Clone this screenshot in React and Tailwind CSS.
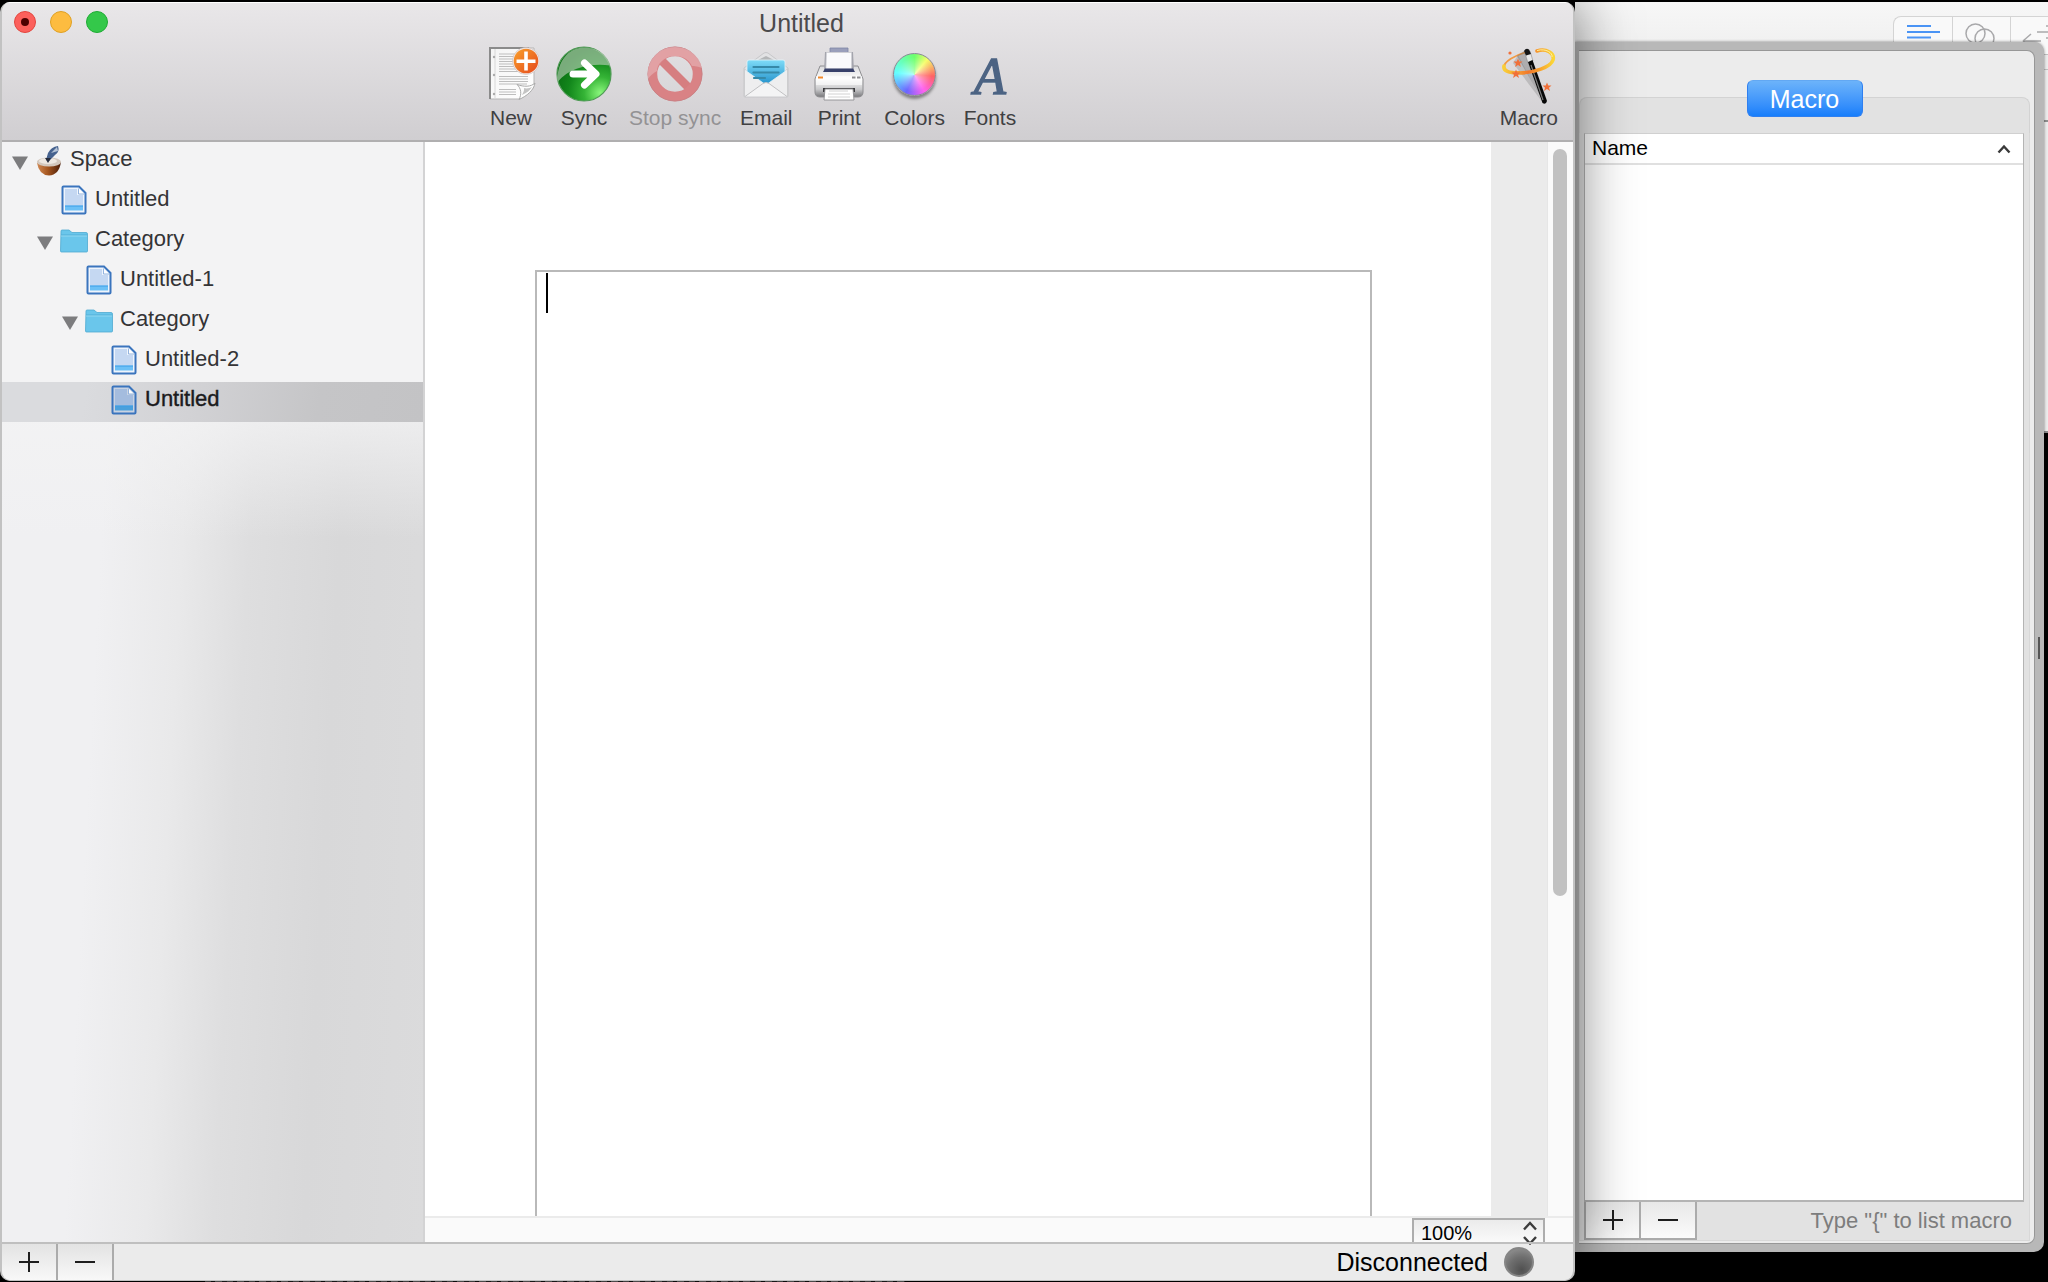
import React from "react";

function NewIcon() {
  return (
    <svg width="56" height="56" viewBox="0 0 56 56" className="shrink-0" aria-hidden="true">
      <defs>
        <linearGradient id="paper" x1="0" y1="0" x2="1" y2="1">
          <stop offset="0" stopColor="#f4f4f4" />
          <stop offset="1" stopColor="#ffffff" />
        </linearGradient>
        <linearGradient id="plus" x1="0" y1="0" x2="1" y2="1">
          <stop offset="0" stopColor="#f9a12c" />
          <stop offset="1" stopColor="#e5481c" />
        </linearGradient>
      </defs>
      <path d="M7 2H51V38L37 53H7Z" fill="url(#paper)" stroke="#b5b5b5" strokeWidth="1" />
      <path d="M7 53V2H46" fill="none" stroke="#8b8b8b" strokeWidth="2" />
      <path d="M12 3V53" stroke="#d8d8d8" strokeWidth="1" />
      <g stroke="#bdbdbd" strokeWidth="1.200">
        <path d="M16 8H34M16 10.5H31M16 13H30M16 15.5H30M16 18H31M16 20.5H32M16 23H34M16 25.5H38" />
        <path d="M16 30.500H45M16 33H45M16 35.500H45M16 38H44M16 43.500H33M16 46H33M16 48.500H33" />
      </g>
      <g fill="#aaa">
        <circle cx="11" cy="11" r="1.200" />
        <circle cx="11" cy="29" r="1.200" />
        <circle cx="11" cy="48" r="1.200" />
      </g>
      <path d="M36 53.500C39 48 38 42 34 38.500C41 41 48 41 52 37C51 44 44 50 36 53.500Z" fill="#fdfdfd" stroke="#aaa" strokeWidth="1" />
      <path d="M39 49C41.500 45 41 43 41 42C44 43 47 42 49 41C47 44 44 47 39 49Z" fill="#c4c4c4" />
      <circle cx="43" cy="15" r="13.500" fill="#f3eeee" stroke="#c9b9b5" strokeWidth="0.600" />
      <circle cx="43" cy="15" r="12.300" fill="url(#plus)" />
      <path d="M43 5.500V24.500M33.500 15.300H52.500" stroke="#fff" strokeWidth="3.600" />
    </svg>
  );
}

function SyncIcon() {
  return (
    <svg width="56" height="56" viewBox="0 0 56 56" className="shrink-0" aria-hidden="true">
      <defs>
        <radialGradient id="green" cx="0.8" cy="0.85" r="0.85">
          <stop offset="0" stopColor="#8af77c" />
          <stop offset="0.35" stopColor="#35b436" />
          <stop offset="0.7" stopColor="#12861b" />
          <stop offset="1" stopColor="#0a7013" />
        </radialGradient>
      </defs>
      <circle cx="28" cy="28" r="27" fill="url(#green)" stroke="#4f9a55" strokeWidth="1.200" />
      <path d="M1.500 35C1 16 12 1.500 28 1.500C43 1.500 52 10 54 19.500C36 17 14 21 1.500 36Z" fill="#c3d3c1" fillOpacity="0.600" />
      <path d="M17 28H39M28.500 17L40 28L28.500 39" fill="none" stroke="#fff" strokeWidth="7" strokeLinecap="round" strokeLinejoin="round" />
    </svg>
  );
}

function StopIcon() {
  return (
    <svg width="56" height="56" viewBox="0 0 56 56" className="shrink-0" aria-hidden="true">
      <path d="M12 12L44 44" stroke="#d67e80" strokeWidth="8.500" />
      <circle cx="28" cy="28" r="22.500" fill="none" stroke="#d98285" strokeWidth="9.500" />
      <circle cx="28" cy="28" r="27" fill="none" stroke="#c98286" strokeWidth="1" />
      <path d="M1 30C0 13 12 1 28 1C43 1 54 12 55 22C49 20 46 20 45 20C41 12 34 10 28 10C17 10 10 18 10 25C6 27 3 30 1 33Z" fill="#ecc0c3" fillOpacity="0.500" />
    </svg>
  );
}

function EmailIcon() {
  return (
    <svg width="46" height="56" viewBox="0 0 46 56" className="shrink-0" aria-hidden="true">
      <defs>
        <linearGradient id="letter" x1="0" y1="0" x2="0" y2="1">
          <stop offset="0" stopColor="#7fdcf8" />
          <stop offset="1" stopColor="#2593cc" />
        </linearGradient>
      </defs>
      <path d="M1 22L21 7Q23 6 25 7L45 22V50Q45 51 44 51H2Q1 51 1 50Z" fill="#e2e2e4" stroke="#c6c6c9" strokeWidth="1" />
      <path d="M15 14L23 10L31 14Z" fill="#b4b6b8" />
      <path d="M1.500 23L21 37Q23 38.500 25 37L44.500 23V50.500H1.500Z" fill="#eeeeef" stroke="#c4c4c6" strokeWidth="0.700" />
      <path d="M4 16Q4 14 6 14H40Q42 14 42 16V25.500L25 37.500Q23 38.500 21 37.500L4 25.500Z" fill="url(#letter)" stroke="#e4f4f9" strokeWidth="0.800" />
      <path d="M10.500 21H35.500M10.500 26.500H35.500M11 32H22" stroke="#3689a8" strokeWidth="2.200" strokeLinecap="round" />
      <path d="M2 50.500L20 37.500Q23 35.500 26 37.500L44 50.500" fill="#f4f4f5" stroke="#c0c0c2" strokeWidth="1" />
    </svg>
  );
}

function PrintIcon() {
  return (
    <svg width="50" height="56" viewBox="0 0 50 56" className="shrink-0" aria-hidden="true">
      <defs>
        <linearGradient id="body" x1="0" y1="0" x2="0" y2="1">
          <stop offset="0" stopColor="#d9d9db" />
          <stop offset="0.400" stopColor="#fcfcfc" />
          <stop offset="0.750" stopColor="#c9c9cb" />
          <stop offset="1" stopColor="#77777a" />
        </linearGradient>
      </defs>
      <path d="M16 2H34V8H16Z" fill="#9a9fbb" stroke="#7f86a5" strokeWidth="0.800" />
      <path d="M6 20H44L49 33V46Q49 51 44 51H6Q1 51 1 46V33Z" fill="url(#body)" stroke="#8e8e91" strokeWidth="1" />
      <path d="M11 6H39L40 25H10Z" fill="#a4a5ad" />
      <path d="M12.500 6.500H37.500V23H12Z" fill="#fafafc" stroke="#d0d0d5" strokeWidth="0.600" />
      <path d="M11 22.500H39L41 26H9Z" fill="#38416a" />
      <path d="M2 30H48V39H2Z" fill="#fff" fillOpacity="0.600" />
      <path d="M4 31.500H9" stroke="#f28a2c" strokeWidth="2.200" />
      <path d="M38 31.500H41.500M43 31.500H46.500" stroke="#8c8c90" strokeWidth="2.200" />
      <path d="M9 42H41V46H9Z" fill="#3a3a3d" />
      <path d="M11 43H39L40 54H10Z" fill="#fff" stroke="#8f8f92" strokeWidth="0.900" />
      <path d="M15 45H34M14 48H36M14 51H36" stroke="#d2d2d2" strokeWidth="1" />
    </svg>
  );
}

function ColorsIcon() {
  return (
    <span className="flex h-14 shrink-0 flex-col items-center justify-end pb-1.5">
      <span className="h-[43px] w-[43px] rounded-full border border-[#8a8a94] bg-[radial-gradient(circle,#ffffff88,transparent_60%),conic-gradient(#6cff6c,#f5ff6c_40deg,#ff6464_95deg,#ff62f0_150deg,#6b66ff_205deg,#64ffff_275deg,#6cff6c)] shadow-[0_3px_3px_rgba(0,0,0,0.4)]" />
    </span>
  );
}

function FontsIcon() {
  return (
    <span className="flex h-14 shrink-0 items-end justify-center font-['Liberation_Serif',serif] text-[52px] leading-[50px] text-[#4c6383] italic [-webkit-text-stroke:1.500px_#4c6383] [text-shadow:0_1px_1px_#ffffff]" aria-hidden="true">
      A
    </span>
  );
}

function WandIcon() {
  const star = "M0-4.500L1.300-1.400L4.500-1.400L2 .7L3 4L0 2L-3 4L-2 .7L-4.500-1.400L-1.300-1.400Z";
  return (
    <svg width="58" height="58" viewBox="0 0 58 58" className="-mb-0.5 shrink-0" aria-hidden="true">
      <defs>
        <linearGradient id="halo" x1="0" y1="0" x2="1" y2="0">
          <stop offset="0" stopColor="#f9cf38" />
          <stop offset="0.500" stopColor="#f3772a" />
          <stop offset="1" stopColor="#fbd636" />
        </linearGradient>
      </defs>
      <path d="M28 5.500C15 9 3 16 4 22C5 26 11 27 20 26" fill="none" stroke="#f29a45" strokeWidth="1.800" />
      <path d="M18 9L13 17L43 57Z" fill="#777" fillOpacity="0.300" />
      <path d="M24 5L17 10L44 57Z" fill="#666" fillOpacity="0.400" />
      <path d="M25 7L30 5L33 15L28 17Z" fill="#e9e9e9" stroke="#777" strokeWidth="0.500" />
      <path d="M24 5Q26 1.500 29 3.500L31 8L26 9.500Z" fill="#151515" />
      <path d="M28 16L32.500 14L47 55Q46 59 42.500 57Z" fill="#080808" />
      <path d="M31 19L43 54" stroke="#7c7c7c" strokeWidth="1.200" />
      <path d="M37 5C46 2 55 7 53 14C51 21 34 27 19 27C9 27 3 25 4 20" fill="none" stroke="url(#halo)" strokeWidth="3.600" strokeLinecap="round" />
      <path d="M37 4.500C46 2 53 7 52 11" fill="none" stroke="#fff1a0" strokeWidth="1" />
      <g fill="#f0703a">
        <path d={star} transform="translate(18 17)" />
        <path d={star} transform="translate(16 28)" />
        <path d={star} transform="translate(47 41)" />
        <circle cx="10" cy="7" r="1.600" />
      </g>
    </svg>
  );
}

function DocIcon({ dim }) {
  return (
    <svg width="26" height="30" viewBox="0 0 26 30" className="mb-1 shrink-0" aria-hidden="true">
      <path d="M2.500 1.500H18L24.500 8V27.500Q24.500 28.500 23.500 28.500H2.500Q1.500 28.500 1.500 27.500V2.500Q1.500 1.500 2.500 1.500Z" fill={dim ? "#c9d3e2" : "#eef4fc"} stroke="#3a74bd" strokeWidth="2" />
      <path d="M4 4H16V10H22V20H4Z" fill={dim ? "#a4bcde" : "#c5d8f2"} />
      <path d="M17.500 3.500V9H23" fill="#fff" stroke="#89addb" strokeWidth="0.900" />
      <path d="M4 20.500H22V25.500H4Z" fill={dim ? "#4aa0dc" : "#6cc0f6"} />
      <path d="M4 21H22" stroke="#3a9be6" strokeWidth="1" />
    </svg>
  );
}

function FolderIcon() {
  return (
    <svg width="28" height="24" viewBox="0 0 28 24" className="mb-0.5 shrink-0" aria-hidden="true">
      <path d="M1 2Q1 1 2 1H9L12 3.500H26Q27.500 3.500 27.500 5V22Q27.500 23 26.500 23H1.500Q.5 23 .5 22Z" fill="#6ac6eb" stroke="#4ea9d0" strokeWidth="0.800" />
      <path d="M1 6H27" stroke="#50aed6" strokeWidth="1" />
      <path d="M1 7H27" stroke="#9ddcf3" strokeWidth="0.800" />
    </svg>
  );
}

function InkPotIcon() {
  return (
    <svg width="26" height="30" viewBox="0 0 26 30" className="mb-0.5 shrink-0" aria-hidden="true">
      <defs>
        <linearGradient id="pot" x1="0" y1="0" x2="1" y2="0">
          <stop offset="0" stopColor="#d08a55" />
          <stop offset="0.450" stopColor="#a5561f" />
          <stop offset="1" stopColor="#4a1d09" />
        </linearGradient>
      </defs>
      <path d="M1 17Q3 29 13 29.500Q23 29 25 16Z" fill="url(#pot)" />
      <ellipse cx="13" cy="16" rx="12" ry="4.500" fill="#d3c8be" />
      <ellipse cx="12" cy="15" rx="9" ry="3" fill="#eee8e1" />
      <path d="M10 14L12 7Q15 1 22 0Q24 6 19 9L13 15Z" fill="#46628f" />
      <path d="M15 7L21 1L22 5Z" fill="#b4c2d6" />
      <path d="M9 12L12 17L15 12Z" fill="#262c3c" />
    </svg>
  );
}

const tools = [
  { label: "New", Icon: NewIcon },
  { label: "Sync", Icon: SyncIcon },
  { label: "Stop sync", Icon: StopIcon, disabled: true },
  { label: "Email", Icon: EmailIcon },
  { label: "Print", Icon: PrintIcon },
  { label: "Colors", Icon: ColorsIcon },
  { label: "Fonts", Icon: FontsIcon },
];

function ToolButton({ label, Icon, disabled }) {
  return (
    <button type="button" disabled={disabled} className="flex min-w-14 flex-col items-center text-[#404042] disabled:text-[#939294]">
      <Icon />
      <span className="mt-1 text-[21px] leading-6 whitespace-nowrap">{label}</span>
    </button>
  );
}

const rows = [
  { label: "Space", kind: "root", pad: "pl-[10px]" },
  { label: "Untitled", kind: "doc", pad: "pl-[35px]" },
  { label: "Category", kind: "folder", pad: "pl-[35px]" },
  { label: "Untitled-1", kind: "doc", pad: "pl-[60px]" },
  { label: "Category", kind: "folder", pad: "pl-[60px]" },
  { label: "Untitled-2", kind: "doc", pad: "pl-[85px]" },
  { label: "Untitled", kind: "doc", pad: "pl-[85px]", selected: true },
];

function TreeRow({ label, kind, pad, selected }) {
  return (
    <li className={selected ? "bg-[linear-gradient(100deg,#dadbde_20%,#d2d2d5_45%,#c5c5c7_75%,#c3c3c5)] text-[#1b1b1d] [-webkit-text-stroke:0.4px_#1b1b1d]" : "text-[#343436]"}>
      <button type="button" className={"flex h-10 w-full items-center text-left " + pad}>
        <span className="flex w-6 shrink-0">
          {kind !== "doc" && (
            <svg width="16" height="14" viewBox="0 0 16 14" className="mt-0.5" aria-hidden="true">
              <path d="M0 .5H16L8 14Z" fill="#7c7c7e" />
            </svg>
          )}
        </span>
        <span className="flex w-[26px] shrink-0 justify-center">
          {kind === "root" && <InkPotIcon />}
          {kind === "folder" && <FolderIcon />}
          {kind === "doc" && <DocIcon dim={selected} />}
        </span>
        <span className="ml-2 pb-1.5 text-[22px] leading-6">{label}</span>
      </button>
    </li>
  );
}

function Sign({ plus }) {
  return (
    <svg width="20" height="20" viewBox="0 0 20 20" aria-hidden="true">
      <path d={plus ? "M0 10H20M10 0V20" : "M0 10H20"} stroke="#1e1e1e" strokeWidth="2" />
    </svg>
  );
}

function MainWindow() {
  return (
    <main className="relative z-10 flex min-w-0 flex-1 flex-col overflow-hidden rounded-[10px] border-x-2 border-b border-[#c2c2c2] bg-[#ebebeb] shadow-[0_0_60px_rgba(0,0,0,0.55)]">
      <header className="flex h-[140px] shrink-0 flex-col border-t border-b-2 border-t-white border-b-[#b0afb0] bg-linear-to-b from-[#e9e7e9] to-[#d0ced1]">
        <div className="grid h-[43px] grid-cols-3 items-start pt-2">
          <div className="flex gap-[14px] pl-3">
            <button type="button" aria-label="Close" className="flex h-[22px] w-[22px] items-center justify-center rounded-full border border-[#e2463f] bg-[#fc605c]">
              <span className="h-2 w-2 rounded-full bg-[#4d0000]" />
            </button>
            <button type="button" aria-label="Minimize" className="h-[22px] w-[22px] rounded-full border border-[#dfa023] bg-[#fdbc40]" />
            <button type="button" aria-label="Zoom" className="h-[22px] w-[22px] rounded-full border border-[#1fab35] bg-[#34c84a]" />
          </div>
          <h1 className="pl-7 text-center text-[25px] leading-6 text-[#4b4a4c]">Untitled</h1>
        </div>
        <div className="flex justify-between pr-[15px] pl-[481px]">
          <div className="flex gap-[17px]">
            {tools.map((t) => (
              <ToolButton key={t.label} {...t} />
            ))}
          </div>
          <ToolButton label="Macro" Icon={WandIcon} />
        </div>
      </header>

      <div className="flex min-h-0 flex-1">
        <nav aria-label="Documents" className="w-[423px] shrink-0 border-r-2 border-[#d3d3d4] bg-[linear-gradient(to_bottom,#f3f3f4_22%,transparent_36%),linear-gradient(93deg,#f0f0f2_25%,#e9e9ea_42%,#dededf_56%,#d8d8d9_75%,#dbdbdc)]">
          <ul>
            {rows.map((r, i) => (
              <TreeRow key={i} {...r} />
            ))}
          </ul>
        </nav>

        <div className="flex min-w-0 flex-1 flex-col">
          <div className="flex min-h-0 flex-1">
            <div className="flex min-w-0 flex-1 bg-white pt-32 pr-[119px] pl-[110px]">
              <textarea
                aria-label="Document text"
                defaultValue=""
                className="w-full resize-none border-2 border-b-0 border-[#b9b9b9] bg-[linear-gradient(#000,#000)] bg-size-[2px_40px] bg-position-[9px_1px] bg-no-repeat outline-none"
              />
            </div>
            <div className="w-14 shrink-0 bg-[#ebebeb]" />
            <div className="w-[26px] shrink-0 border-l border-[#e6e6e6] bg-[#fafafa] pt-[7px] pl-[5px]">
              <div className="h-[70%] w-[14px] rounded-full bg-[#c1c1c1]" />
            </div>
          </div>
          <div className="flex h-[26px] shrink-0 justify-end border-t-2 border-[#ebebeb] bg-[#fafafa] pr-[28px]">
            <label className="flex w-[133px] items-center border-2 border-b-0 border-[#adadad] bg-linear-to-b from-[#ebebeb] to-[#fafafa]">
              <select aria-label="Zoom level" className="w-0 flex-1 appearance-none pt-1 pl-[7px] text-[20px] leading-6 text-black">
                <option>100%</option>
              </select>
              <svg width="14" height="24" viewBox="0 0 14 24" className="mr-1.5 mt-1" aria-hidden="true">
                <path d="M1 8.500L7 2L13 8.500M1 16L7 22.500L13 16" fill="none" stroke="#3c3c3c" strokeWidth="2.400" />
              </svg>
            </label>
          </div>
        </div>
      </div>

      <footer className="flex h-[38px] shrink-0 items-stretch justify-between border-t-2 border-[#bfbfbf]">
        <div className="flex">
          <button type="button" aria-label="Add document" className="flex w-14 items-center justify-center border-r-2 border-[#ababab] bg-linear-to-b from-[#e3e3e3] to-[#f8f8f8]">
            <Sign plus />
          </button>
          <button type="button" aria-label="Remove document" className="flex w-14 items-center justify-center border-r-2 border-[#ababab] bg-linear-to-b from-[#e3e3e3] to-[#f8f8f8]">
            <Sign />
          </button>
        </div>
        <div className="flex items-center gap-4 pr-[39px]">
          <span className="text-[25px] leading-8 text-black">Disconnected</span>
          <span className="h-[30px] w-[30px] rounded-full border-2 border-[#858585] bg-[radial-gradient(circle_at_60%_80%,#505050,#6f6f6f_50%,#9a9a9a)]" />
        </div>
      </footer>
    </main>
  );
}

function BackdropWindow() {
  return (
    <div className="absolute inset-x-0 top-0 h-[431px] border-b-2 border-[#8e8e8e] bg-[#ececec]">
      <div className="flex h-[53px] justify-end border-b border-[#c0c0c0] bg-linear-to-b from-[#f7f7f7] to-[#efefef] pt-3.5">
        <div className="flex w-[155px] items-start rounded-tl-lg border-t border-l border-[#d4d4d4] bg-[#f9f9f9] text-[#a9a9ab]">
          <button type="button" aria-label="Align" className="flex h-full w-[59px] justify-center border-r border-[#d4d4d4] pt-1.5">
            <svg width="34" height="18" viewBox="0 0 34 18" aria-hidden="true">
              <path d="M1 3H25M1 9H34M1 14.500H25" stroke="#4a94f5" strokeWidth="2" />
            </svg>
          </button>
          <button type="button" aria-label="Versions" className="flex h-full w-[58px] justify-center border-r border-[#d4d4d4] pt-1.5 pr-1">
            <svg width="30" height="28" viewBox="0 0 30 28" aria-hidden="true">
              <circle cx="10.500" cy="10.500" r="9.500" fill="none" stroke="currentColor" strokeWidth="1.500" />
              <circle cx="19.500" cy="15.500" r="9.500" fill="none" stroke="currentColor" strokeWidth="1.500" />
            </svg>
          </button>
          <button type="button" aria-label="Compare" className="flex h-full flex-1 overflow-hidden pt-1.5 pl-2.5">
            <svg width="28" height="28" viewBox="0 0 28 28" className="shrink-0" aria-hidden="true">
              <path d="M16 9H28M25 3L28 3M25 15H28M2 18H20M2 18L10 11M2 18L10 25" fill="none" stroke="currentColor" strokeWidth="1.500" />
            </svg>
          </button>
        </div>
      </div>
      <div className="h-[15px] border-b border-[#c0c0c0]" />
      <div className="h-[52px] border-b-2 border-[#909090]" />
    </div>
  );
}

function MacroWindow() {
  return (
    <section aria-label="Macro" className="relative mt-10 mr-1 mb-[30px] flex flex-1 flex-col rounded-r-[10px] bg-[#b8b8b8] pt-2 pr-[9px] pb-2 pl-1 shadow-[0_0_3px_rgba(0,0,0,0.5)]">
      <div className="flex flex-1 flex-col rounded-r-lg border border-l-0 border-[#979797] bg-[#ececec] pr-1 pb-0.5">
        <div className="flex h-[82px] shrink-0 flex-col">
          <div className="h-[46px]" />
          <div className="flex flex-1 justify-center rounded-t-lg border border-b-0 border-[#d3d3d3] bg-[#e2e2e2]">
            <button type="button" className="-mt-[18px] flex h-[37px] w-[116px] items-center justify-center self-start rounded-md border border-[#2f7ff0] border-t-[#62a8f3] bg-linear-to-b from-[#6cb3fa] to-[#167efb] text-[25px] leading-8 text-white">
              Macro
            </button>
          </div>
        </div>
        <div className="flex flex-1 flex-col border-x border-b border-[#d8d8d8] bg-[#e2e2e2] pr-[5px] pl-1">
          <div className="flex-1 border-x border-t border-b-2 border-[#b4b4b4] border-t-[#d0d0d0] bg-white">
            <table className="w-full">
              <thead>
                <tr className="h-[30px] border-b-2 border-[#e0e0e0]">
                  <th scope="col" className="p-0 pb-0.5 pl-[7px] text-left text-[21px] leading-6 font-normal text-black">Name</th>
                  <th scope="col" aria-label="Sort order" className="w-[26px] p-0">
                    <svg width="14" height="10" viewBox="0 0 14 10" aria-hidden="true">
                      <path d="M1.500 8.500L7 2.500L12.500 8.500" fill="none" stroke="#3a3a3a" strokeWidth="2.400" />
                    </svg>
                  </th>
                </tr>
              </thead>
            </table>
          </div>
          <div className="flex h-[38px] shrink-0 justify-between">
            <div className="flex border-b-2 border-l-2 border-[#ababab]">
              <button type="button" aria-label="Add macro" className="flex w-[55px] items-center justify-center border-r-2 border-[#ababab] bg-linear-to-b from-[#e8e8e8] to-[#fbfbfb]">
                <Sign plus />
              </button>
              <button type="button" aria-label="Remove macro" className="flex w-14 items-center justify-center border-r-2 border-[#ababab] bg-linear-to-b from-[#e8e8e8] to-[#fbfbfb]">
                <Sign />
              </button>
            </div>
            <p className="self-center pr-3 text-[22px] leading-6 text-[#7d7d7d]">{'Type "{" to list macro'}</p>
          </div>
        </div>
      </div>
      <span className="absolute top-[595px] right-1 h-[22px] w-[2px] bg-[#555]" />
    </section>
  );
}

export default function App() {
  return (
    <div className="flex h-screen bg-black bg-[repeating-linear-gradient(90deg,#555_0_6px,#111_6px_10px,#666_10px_17px,#222_17px_22px)] bg-size-[700px_2px] bg-position-[205px_100%] bg-no-repeat pt-0.5 font-['Liberation_Sans',Arial,sans-serif]">
      <div className="flex min-w-0 flex-1 pb-px">
        <MainWindow />
      </div>
      <aside className="relative flex w-[473px] shrink-0 bg-black">
        <BackdropWindow />
        <MacroWindow />
      </aside>
    </div>
  );
}
